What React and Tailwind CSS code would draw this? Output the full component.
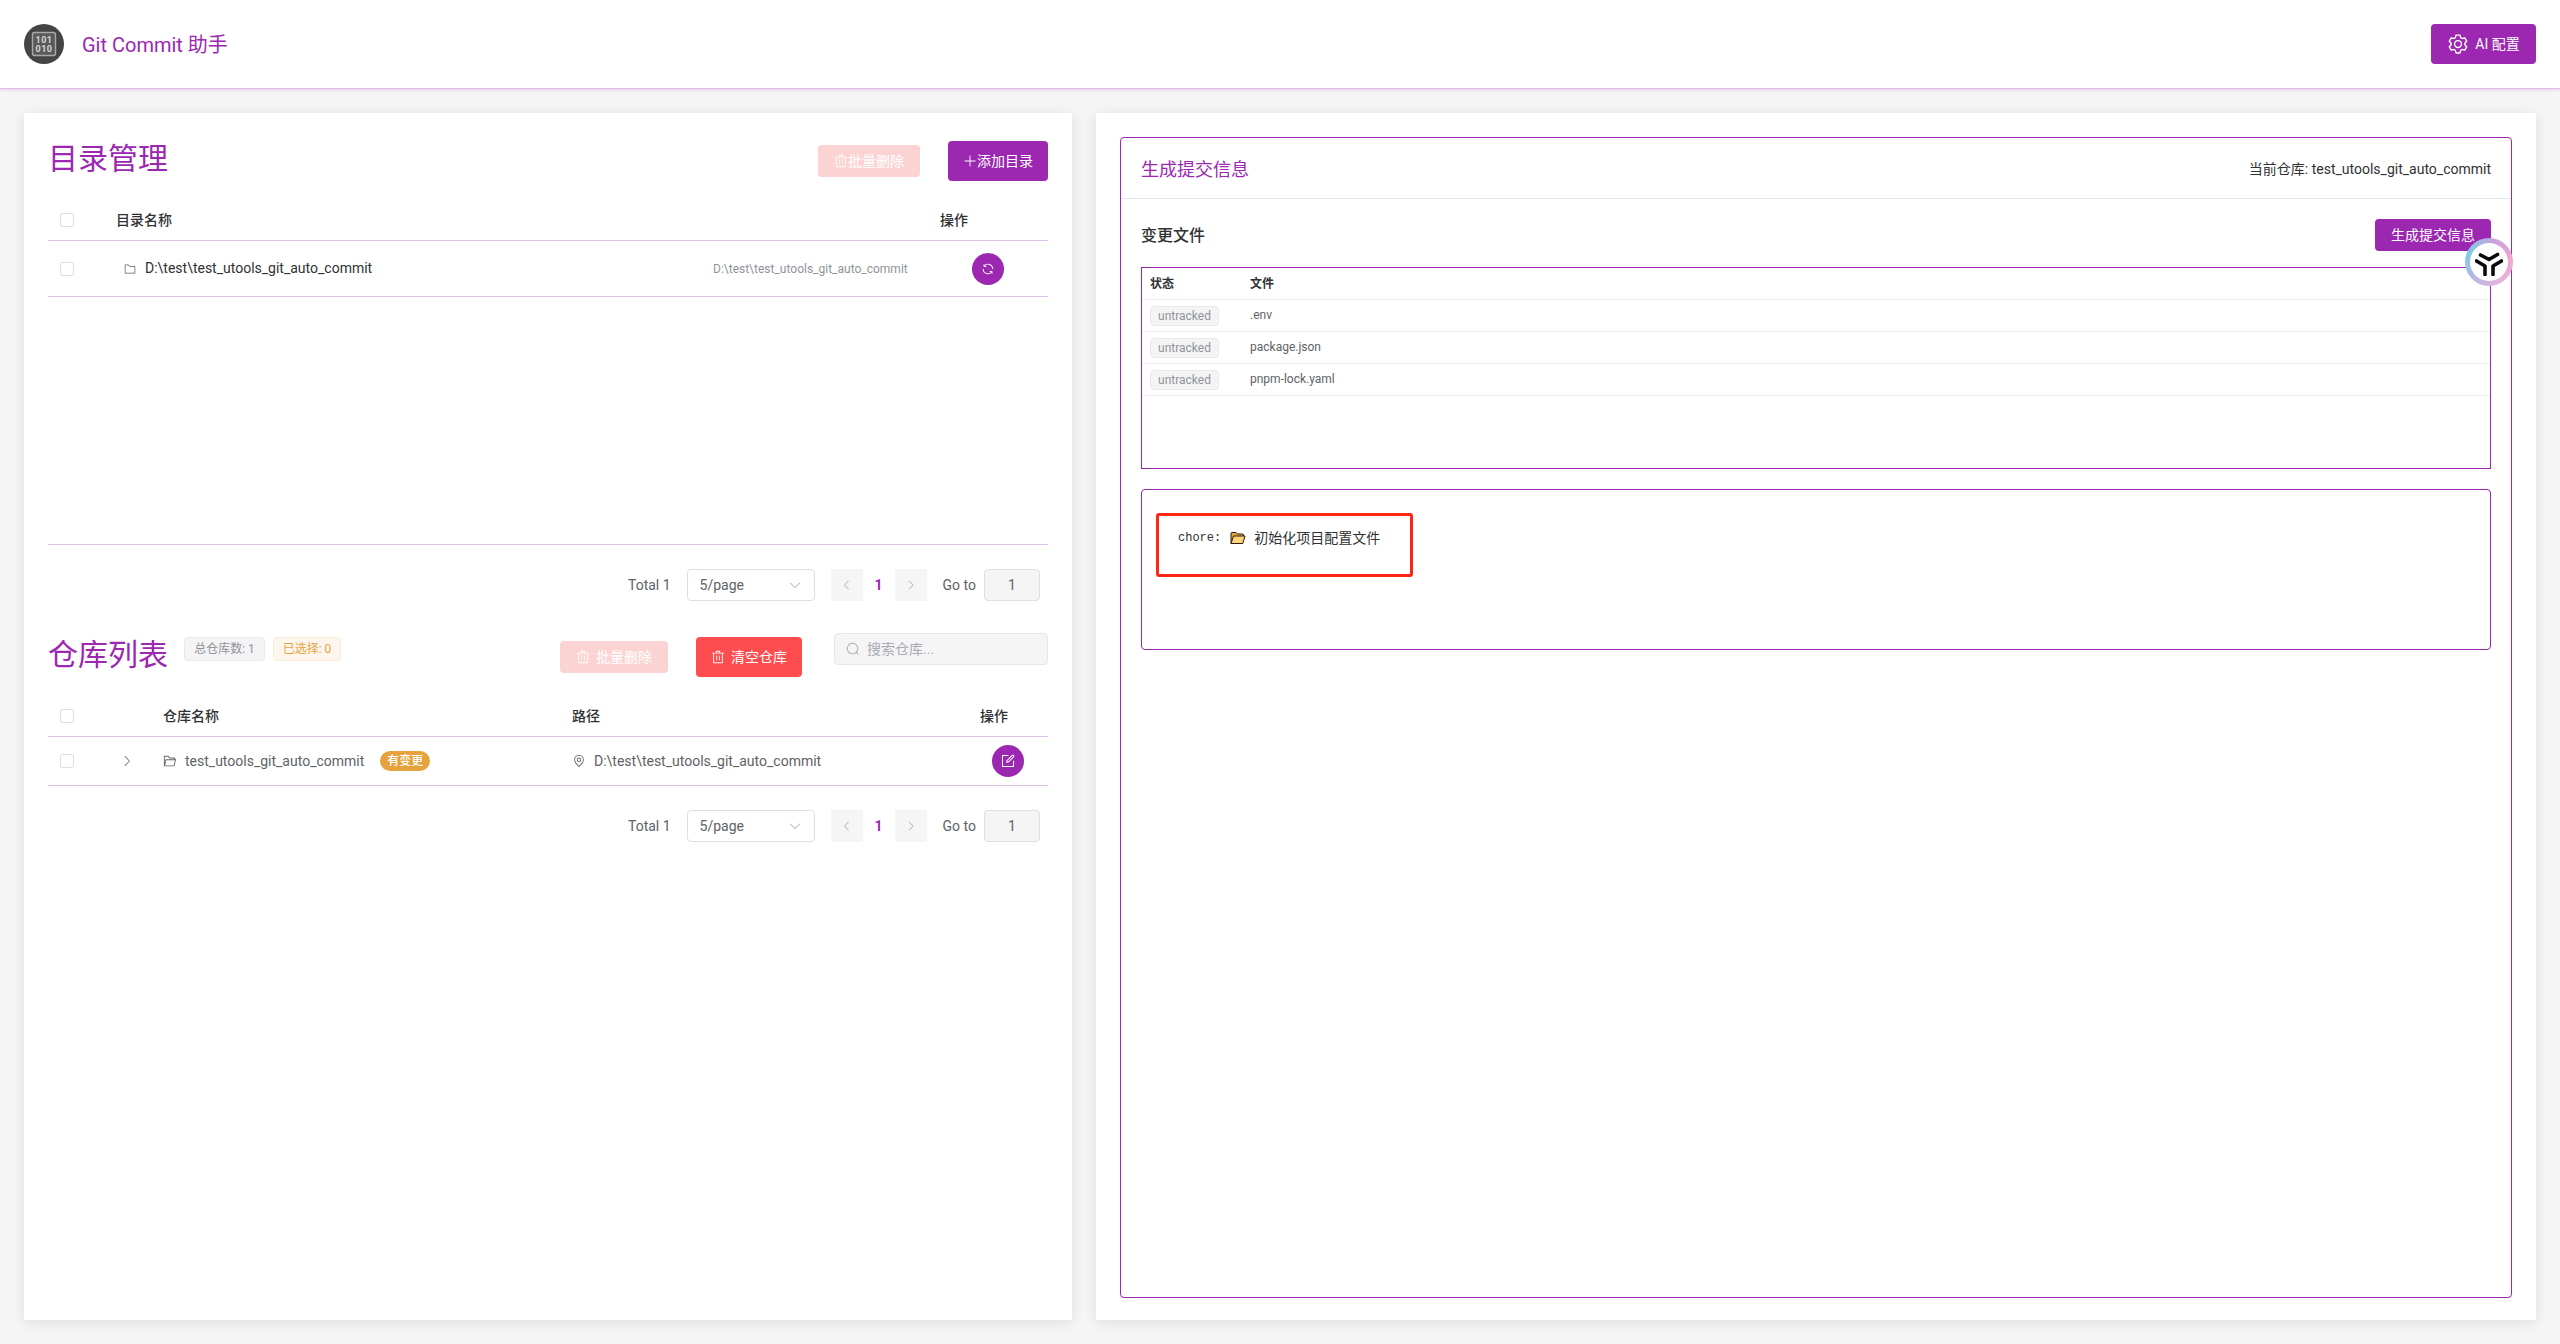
import React from "react";

const FONT = "font-['Roboto','Noto_Sans_CJK_SC',sans-serif]";

const paths = {
  del: ["M160 256H96a32 32 0 0 1 0-64h256V95.936a32 32 0 0 1 32-32h256a32 32 0 0 1 32 32V192h256a32 32 0 1 1 0 64h-64v672a32 32 0 0 1-32 32H192a32 32 0 0 1-32-32V256zm448-64v-64H416v64h192zM224 896h576V256H224v640zm192-128a32 32 0 0 1-32-32V416a32 32 0 0 1 64 0v320a32 32 0 0 1-32 32zm192 0a32 32 0 0 1-32-32V416a32 32 0 0 1 64 0v320a32 32 0 0 1-32 32z"],
  plus: ["M480 480V128a32 32 0 0 1 64 0v352h352a32 32 0 1 1 0 64H544v352a32 32 0 1 1-64 0V544H128a32 32 0 0 1 0-64h352z"],
  search: ["m795.904 750.72 124.992 124.928a32 32 0 0 1-45.248 45.248L750.656 795.904a416 416 0 1 1 45.248-45.248zM480 832a352 352 0 1 0 0-704 352 352 0 0 0 0 704z"],
  right: ["M340.864 149.312a30.592 30.592 0 0 0 0 42.752L652.736 512 340.864 831.872a30.592 30.592 0 0 0 0 42.752 29.12 29.12 0 0 0 41.728 0L714.24 534.336a32 32 0 0 0 0-44.672L382.592 149.376a29.12 29.12 0 0 0-41.728 0z"],
  left: ["M609.408 149.376 277.76 489.6a32 32 0 0 0 0 44.672l331.648 340.352a29.12 29.12 0 0 0 41.728 0 30.592 30.592 0 0 0 0-42.752L339.264 511.936l311.872-319.872a30.592 30.592 0 0 0 0-42.688 29.12 29.12 0 0 0-41.728 0z"],
  down: ["M831.872 340.864 512 652.672 192.128 340.864a30.592 30.592 0 0 0-42.752 0 29.12 29.12 0 0 0 0 41.6L489.664 714.24a32 32 0 0 0 44.672 0l340.288-331.712a29.12 29.12 0 0 0 0-41.6 30.592 30.592 0 0 0-42.752 0z"],
  folder: ["M128 192v640h768V320H485.76L357.504 192H128zm-32-64h287.872l128.384 128H928a32 32 0 0 1 32 32v576a32 32 0 0 1-32 32H96a32 32 0 0 1-32-32V160a32 32 0 0 1 32-32z"],
  folderOpen: ["M878.08 448H241.92l-96 384h636.16l96-384zM832 384v-64H485.76L357.504 192H128v448l57.92-231.744A32 32 0 0 1 216.96 384H832zm-24.96 512H96a32 32 0 0 1-32-32V160a32 32 0 0 1 32-32h287.872l128.384 128H864a32 32 0 0 1 32 32v96h23.04a32 32 0 0 1 31.04 39.744l-112 448A32 32 0 0 1 807.04 896z"],
  location: ["M800 416a288 288 0 1 0-576 0c0 118.144 94.528 272.128 288 456.576C705.472 688.128 800 534.144 800 416zM512 960C277.312 746.688 160 565.312 160 416a352 352 0 0 1 704 0c0 149.312-117.312 330.688-352 544z", "M512 512a96 96 0 1 0 0-192 96 96 0 0 0 0 192zm0 64a160 160 0 1 1 0-320 160 160 0 0 1 0 320z"],
  setting: ["M600.704 64a32 32 0 0 1 30.464 22.208l35.2 109.376c14.784 7.232 28.928 15.36 42.432 24.512l112.384-24.192a32 32 0 0 1 34.432 15.36L944.32 364.8a32 32 0 0 1-4.032 37.504l-77.12 85.12a357.12 357.12 0 0 1 0 49.024l77.12 85.248a32 32 0 0 1 4.032 37.504l-88.704 153.6a32 32 0 0 1-34.432 15.296L708.8 803.904c-13.44 9.088-27.648 17.28-42.368 24.512l-35.264 109.376A32 32 0 0 1 600.704 960H423.296a32 32 0 0 1-30.464-22.208L357.696 828.48a351.616 351.616 0 0 1-42.56-24.64l-112.32 24.256a32 32 0 0 1-34.432-15.36L79.68 659.2a32 32 0 0 1 4.032-37.504l77.12-85.248a357.12 357.12 0 0 1 0-48.896l-77.12-85.248A32 32 0 0 1 79.68 364.8l88.704-153.6a32 32 0 0 1 34.432-15.296l112.32 24.256c13.568-9.152 27.776-17.408 42.56-24.64l35.2-109.312A32 32 0 0 1 423.232 64H600.64zm-23.424 64H446.72l-36.352 113.088-24.512 11.968a294.113 294.113 0 0 0-34.816 20.096l-22.656 15.36-116.224-25.088-65.28 113.152 79.68 88.192-1.92 27.136a293.12 293.12 0 0 0 0 40.192l1.92 27.136-79.808 88.192 65.344 113.152 116.224-25.024 22.656 15.296a294.113 294.113 0 0 0 34.816 20.096l24.512 11.968L446.72 896h130.688l36.48-113.152 24.448-11.904a288.282 288.282 0 0 0 34.752-20.096l22.592-15.296 116.288 25.024 65.28-113.152-79.744-88.192 1.92-27.136a293.12 293.12 0 0 0 0-40.256l-1.92-27.136 79.808-88.128-65.344-113.152-116.288 24.96-22.592-15.232a287.616 287.616 0 0 0-34.752-20.096l-24.448-11.904L577.344 128zM512 320a192 192 0 1 1 0 384 192 192 0 0 1 0-384zm0 64a128 128 0 1 0 0 256 128 128 0 0 0 0-256z"],
  refresh: ["M771.776 794.88A384 384 0 0 1 128 512h64a320 320 0 0 0 555.712 216.448H654.72a32 32 0 1 1 0-64h149.056a32 32 0 0 1 32 32v148.928a32 32 0 1 1-64 0v-50.56zM276.288 295.616h92.992a32 32 0 0 1 0 64H220.16a32 32 0 0 1-32-32V178.56a32 32 0 0 1 64 0v50.56A384 384 0 0 1 896.128 512h-64a320 320 0 0 0-555.776-216.384z"],
  edit: ["M832 512a32 32 0 1 1 64 0v352a32 32 0 0 1-32 32H160a32 32 0 0 1-32-32V160a32 32 0 0 1 32-32h352a32 32 0 0 1 0 64H192v640h640V512z", "m469.952 554.24 52.8-7.552L847.104 222.4a32 32 0 1 0-45.248-45.248L477.44 501.44l-7.552 52.8zm422.4-422.4a96 96 0 0 1 0 135.808l-331.84 331.84a32 32 0 0 1-18.112 9.088L436.8 623.68a32 32 0 0 1-36.224-36.224l15.104-105.6a32 32 0 0 1 9.024-18.112l331.904-331.84a96 96 0 0 1 135.744 0z"],
};

function Icon({ name, className }) {
  return (
    <svg viewBox="0 0 1024 1024" fill="currentColor" className={className}>
      {paths[name].map((d) => (
        <path key={d} d={d} />
      ))}
    </svg>
  );
}

function Checkbox() {
  return <span className="block w-[14px] h-[14px] rounded-[2px] border border-[#dcdfe6] bg-white" />;
}

function Pagination() {
  return (
    <div className="flex items-center justify-end h-8 pr-2 text-[14px] text-[#606266]">
      <span>Total 1</span>
      <div className="ml-4 w-[128px] h-8 flex items-center justify-between px-3 rounded-[4px] border border-[#dcdfe6]">
        <span>5/page</span>
        <Icon name="down" className="w-[14px] h-[14px] text-[#a8abb2]" />
      </div>
      <span className="ml-4 w-8 h-8 flex items-center justify-center rounded-[2px] bg-[#f5f5f5] text-[#a8abb2]">
        <Icon name="left" className="w-3 h-3" />
      </span>
      <span className="w-8 text-center font-bold text-[#9c27b0]">1</span>
      <span className="w-8 h-8 flex items-center justify-center rounded-[2px] bg-[#f5f5f5] text-[#a8abb2]">
        <Icon name="right" className="w-3 h-3" />
      </span>
      <span className="ml-4">Go to</span>
      <div className="ml-2 w-[56px] h-8 flex items-center justify-center rounded-[4px] border border-[#dcdfe6] bg-[#f5f5f5]">1</div>
    </div>
  );
}

function Logo() {
  return (
    <svg viewBox="0 0 40 40" className="w-10 h-10 shrink-0">
      <circle cx="20" cy="20" r="20" fill="#454545" />
      <rect x="8.5" y="8.5" width="23" height="23" rx="2" fill="#5a5a5a" stroke="#a8a8a8" strokeWidth="1.4" />
      <text x="20" y="18.5" textAnchor="middle" fontSize="9" fontWeight="700" letterSpacing="0.5" fill="#d6d6d6" fontFamily="Roboto, sans-serif">101</text>
      <text x="20" y="27.8" textAnchor="middle" fontSize="9" fontWeight="700" letterSpacing="0.5" fill="#d6d6d6" fontFamily="Roboto, sans-serif">010</text>
    </svg>
  );
}

function FloatBadge() {
  return (
    <div className="absolute left-[2465px] top-[238px] w-12 h-12 rounded-full p-[5px] bg-[conic-gradient(from_300deg,#7ecbe3,#c9a0dc,#f0a8d0,#e2b4dc,#b4b8e4,#7ecbe3)]">
      <div className="w-full h-full rounded-full bg-white flex items-center justify-center">
        <svg viewBox="0 0 28 28" className="w-[28px] h-[28px]" fill="none" stroke="#0a0a0a" strokeWidth="3.6" strokeLinecap="round" strokeLinejoin="round">
          <path d="M5.5 7 L14 11.5 L22.5 6.5" />
          <path d="M1.5 13 L10 18 L10 26.5" />
          <path d="M26.5 13 L18 18 L18 26.5" />
        </svg>
      </div>
    </div>
  );
}

function DirectoryTable() {
  return (
    <div className="h-[345px] border-b border-[#e1bee7]">
      <div className="grid grid-cols-[68px_597px_227px_108px] items-center h-[41px] border-b border-[#e1bee7] text-[14px] font-medium text-[#303133]">
        <div className="pl-3"><Checkbox /></div>
        <div>目录名称</div>
        <div />
        <div>操作</div>
      </div>
      <div className="grid grid-cols-[68px_597px_227px_108px] items-center h-[56px] border-b border-[#e1bee7] text-[14px] text-[#303133]">
        <div className="pl-3"><Checkbox /></div>
        <div className="flex items-center pl-2 gap-[9px]">
          <Icon name="folder" className="w-3 h-3 text-[#606266]" />
          <span>D:\test\test_utools_git_auto_commit</span>
        </div>
        <div className="text-[12px] text-[#909399]">D:\test\test_utools_git_auto_commit</div>
        <div className="pl-8">
          <button className="w-8 h-8 rounded-full bg-[#9c27b0] text-white flex items-center justify-center">
            <Icon name="refresh" className="w-[14px] h-[14px]" />
          </button>
        </div>
      </div>
    </div>
  );
}

function RepoTable() {
  return (
    <div>
      <div className="grid grid-cols-[68px_47px_409px_408px_68px] items-center h-[41px] border-b border-[#e1bee7] text-[14px] font-medium text-[#303133]">
        <div className="pl-3"><Checkbox /></div>
        <div />
        <div>仓库名称</div>
        <div>路径</div>
        <div>操作</div>
      </div>
      <div className="grid grid-cols-[68px_47px_409px_408px_68px] items-center h-[49px] border-b border-[#e1bee7] text-[14px] text-[#606266]">
        <div className="pl-3"><Checkbox /></div>
        <div className="pl-1"><Icon name="right" className="w-[14px] h-[14px] text-[#73767a]" /></div>
        <div className="flex items-center">
          <Icon name="folderOpen" className="w-[14px] h-[14px] mr-2" />
          <span>test_utools_git_auto_commit</span>
          <span className="ml-4 h-5 w-[50px] flex items-center justify-center rounded-full bg-[#e6a23c] text-white text-[12px] font-medium">有变更</span>
        </div>
        <div className="flex items-center">
          <Icon name="location" className="w-[14px] h-[14px] mr-2" />
          <span>D:\test\test_utools_git_auto_commit</span>
        </div>
        <div className="pl-3">
          <button className="w-8 h-8 rounded-full bg-[#9c27b0] text-white flex items-center justify-center">
            <Icon name="edit" className="w-4 h-4" />
          </button>
        </div>
      </div>
    </div>
  );
}

function LeftPanel() {
  return (
    <section className="w-[1048px] bg-white p-6 shadow-[0_2px_12px_rgba(0,0,0,0.1)]">
      <div className="flex items-center justify-between h-12 mb-[15px]">
        <h2 className="mb-[5px] text-[30px] leading-none text-[#9c27b0]">目录管理</h2>
        <div className="flex items-center gap-7">
          <button className="w-[102px] h-8 flex items-center justify-center rounded-[4px] bg-[#fcd3d3] text-white text-[14px]">
            <Icon name="del" className="w-[14px] h-[14px]" />
            批量删除
          </button>
          <button className="w-[100px] h-10 flex items-center justify-center rounded-[4px] bg-[#9c27b0] text-white text-[14px]">
            <Icon name="plus" className="w-[14px] h-[14px]" />
            添加目录
          </button>
        </div>
      </div>

      <DirectoryTable />
      <div className="mt-6"><Pagination /></div>

      <div className="mt-8 flex items-start h-[63px]">
        <h2 className="mt-[5px] text-[30px] leading-[34px] text-[#9c27b0]">仓库列表</h2>
        <span className="ml-4 mt-1 w-[81px] h-6 flex items-center justify-center rounded-[4px] border border-[#e9e9eb] bg-[#f4f4f5] text-[12px] text-[#909399]">总仓库数: 1</span>
        <span className="ml-2 mt-1 w-[68px] h-6 flex items-center justify-center rounded-[4px] border border-[#faecd8] bg-[#fdf6ec] text-[12px] text-[#e6a23c]">已选择: 0</span>
        <button className="ml-auto mt-2 w-[108px] h-8 flex items-center justify-center gap-[6px] rounded-[4px] bg-[#fcd3d3] text-white text-[14px]">
          <Icon name="del" className="w-[14px] h-[14px]" />
          批量删除
        </button>
        <button className="ml-7 mt-1 w-[106px] h-10 flex items-center justify-center gap-[6px] rounded-[4px] bg-[#ff4d4f] text-white text-[14px]">
          <Icon name="del" className="w-[14px] h-[14px]" />
          清空仓库
        </button>
        <div className="ml-8 w-[214px] h-8 flex items-center gap-[7px] px-[11px] rounded-[4px] border border-[#e4e7ed] bg-[#f5f5f5] text-[14px] text-[#a8abb2]">
          <Icon name="search" className="w-[14px] h-[14px]" />
          <span>搜索仓库...</span>
        </div>
      </div>

      <RepoTable />
      <div className="mt-6"><Pagination /></div>
    </section>
  );
}

const files = [".env", "package.json", "pnpm-lock.yaml"];

function FolderEmoji() {
  return (
    <svg viewBox="0 0 16 14" className="w-4 h-[14px] ml-[9px] mr-2">
      <path d="M1 12.5 V2.5 Q1 1.5 2 1.5 H6 L7.5 3 H12.5 Q13.5 3 13.5 4 V5" fill="#e8a33a" stroke="#2b1d0e" strokeWidth="1" />
      <path d="M1 12.5 L3.5 5 H15 L12.8 12.5 Z" fill="#ffd27a" stroke="#2b1d0e" strokeWidth="1" strokeLinejoin="round" />
    </svg>
  );
}

function RightPanel() {
  return (
    <section className="w-[1440px] bg-white px-6 pt-6 pb-[22px] shadow-[0_2px_12px_rgba(0,0,0,0.1)]">
      <div className="h-full rounded-[4px] border border-[#9c27b0]">
        <div className="h-[61px] pt-[2px] px-5 flex items-center justify-between border-b border-[#e4e7ed]">
          <span className="text-[18px] text-[#9c27b0]">生成提交信息</span>
          <span className="text-[14px] text-[#303133]">当前仓库: test_utools_git_auto_commit</span>
        </div>
        <div className="p-5">
          <div className="flex items-center justify-between h-8">
            <span className="mt-[2px] text-[16px] font-medium text-[#303133]">变更文件</span>
            <button className="w-[116px] h-8 rounded-[4px] bg-[#9c27b0] text-white text-[14px]">生成提交信息</button>
          </div>

          <div className="mt-4 h-[202px] border border-[#9c27b0] text-[12px]">
            <div className="grid grid-cols-[100px_1fr] items-center h-[32px] px-2 border-b border-[#ebeef5] font-bold text-[#303133]">
              <span>状态</span>
              <span>文件</span>
            </div>
            {files.map((f) => (
              <div key={f} className="grid grid-cols-[100px_1fr] items-center h-[32px] px-2 border-b border-[#ebeef5] text-[#606266]">
                <span className="w-[69px] h-5 flex items-center justify-center rounded-[4px] border border-[#e9e9eb] bg-[#f4f4f5] text-[#909399]">untracked</span>
                <span className="pb-[2px]">{f}</span>
              </div>
            ))}
          </div>

          <div className="mt-5 h-[161px] rounded-[4px] border border-[#9c27b0] pt-[23px] pl-[14px]">
            <div className="w-[257px] h-[64px] rounded-[3px] border-[3px] border-[#ff2618] pl-[19px] pt-3 text-[14px] leading-5 text-[#303133]">
              <div className="flex items-center h-5">
                <span className="font-['Liberation_Mono',monospace] text-[12px]">chore:</span>
                <FolderEmoji />
                <span>初始化项目配置文件</span>
              </div>
            </div>
          </div>
        </div>
      </div>
    </section>
  );
}

export default function App() {
  return (
    <div className={`${FONT} relative h-[1344px] flex flex-col bg-[#f5f5f5]`}>
      <header className="h-[89px] shrink-0 bg-white border-b border-[#e1bee7] shadow-[0_1px_3px_rgba(156,39,176,0.2)] flex items-center justify-between px-6">
        <div className="flex items-center gap-[18px]">
          <Logo />
          <span className="mt-[2px] text-[20px] text-[#9c27b0]">Git Commit 助手</span>
        </div>
        <button className="w-[105px] h-10 flex items-center justify-center gap-[6px] rounded-[4px] bg-[#9c27b0] text-white text-[14px]">
          <Icon name="setting" className="w-[22px] h-[22px]" />
          AI 配置
        </button>
      </header>
      <main className="flex-1 min-h-0 flex gap-6 p-6">
        <LeftPanel />
        <RightPanel />
      </main>
      <FloatBadge />
    </div>
  );
}
